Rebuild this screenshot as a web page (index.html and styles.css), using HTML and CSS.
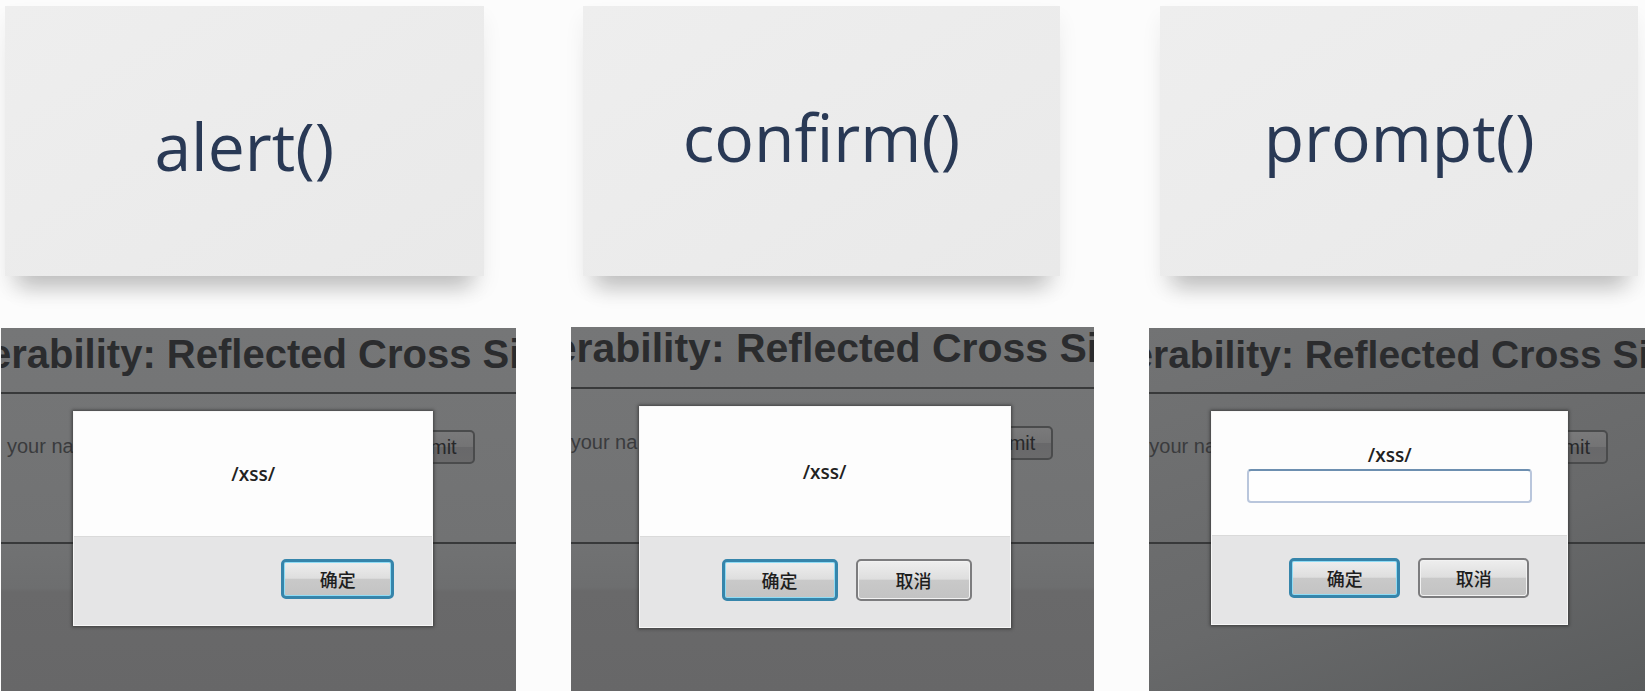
FILE: index.html
```html
<!DOCTYPE html>
<html lang="zh-CN">
<head>
<meta charset="utf-8">
<meta name="viewport" content="width=device-width, initial-scale=1">
<title>alert() confirm() prompt()</title>
<link rel="stylesheet" href="styles.css">
</head>
<body>
<main class="board">
  <article class="column column-alert">
    <h1 class="card">alert()</h1>
    <section class="page">
      <h2 class="page-title">erability: Reflected Cross Si</h2>
      <form class="page-form">
        <span class="page-label">your na</span>
        <button class="submit" type="button">mit</button>
      </form>
      <div class="dialog" role="alertdialog" aria-labelledby="alert-text">
        <div class="dialog-body"><p class="message" id="alert-text">/xss/</p></div>
        <div class="dialog-actions">
          <button class="btn btn-default" type="button">确定</button>
        </div>
      </div>
    </section>
  </article>
  <article class="column column-confirm">
    <h1 class="card">confirm()</h1>
    <section class="page">
      <h2 class="page-title">erability: Reflected Cross Si</h2>
      <form class="page-form">
        <span class="page-label">your na</span>
        <button class="submit" type="button">mit</button>
      </form>
      <div class="dialog" role="alertdialog" aria-labelledby="confirm-text">
        <div class="dialog-body"><p class="message" id="confirm-text">/xss/</p></div>
        <div class="dialog-actions">
          <button class="btn btn-default" type="button">确定</button>
          <button class="btn" type="button">取消</button>
        </div>
      </div>
    </section>
  </article>
  <article class="column column-prompt">
    <h1 class="card">prompt()</h1>
    <section class="page">
      <h2 class="page-title">erability: Reflected Cross Si</h2>
      <form class="page-form">
        <span class="page-label">your na</span>
        <button class="submit" type="button">mit</button>
      </form>
      <div class="dialog" role="dialog" aria-labelledby="prompt-text">
        <div class="dialog-body">
          <label class="message" id="prompt-text" for="prompt-input">/xss/</label>
          <input class="field" id="prompt-input" type="text">
        </div>
        <div class="dialog-actions">
          <button class="btn btn-default" type="button">确定</button>
          <button class="btn" type="button">取消</button>
        </div>
      </div>
    </section>
  </article>
</main>
</body>
</html>
```

FILE: styles.css
```css
* {
  box-sizing: border-box;
}

body {
  margin: 0;
  background: #fcfcfc;
  font-family: "Liberation Sans", "Noto Sans CJK SC", sans-serif;
}

.board {
  display: grid;
  grid-template-columns: 515fr 524fr 496fr;
  column-gap: 55px;
  min-height: 100vh;
  padding-left: 1px;
}

.column {
  display: flex;
  flex-direction: column;
  min-width: 0;
}

/* Raised title cards */
.card {
  display: flex;
  align-items: center;
  justify-content: center;
  height: 270px;
  margin: 6px 32px 52px 4px;
  padding-bottom: 10px;
  background: linear-gradient(150deg, #eeeeee, #e9e9e9);
  box-shadow: 0 26px 20px -14px rgba(0, 0, 0, 0.2), 0 12px 20px rgba(0, 0, 0, 0.06);
  color: #293955;
  font-family: "Open Sans", "Noto Sans", sans-serif;
  font-size: 66px;
  font-weight: 500;
  line-height: 90px;
}

.column-alert .card {
  padding-top: 18px;
}

.column-confirm .card {
  margin: 6px 34px 51px 12px;
}

.column-prompt .card {
  margin: 6px 7px 52px 11px;
}

/* Dimmed page behind each dialog */
.page {
  position: relative;
  flex: 1;
  min-height: 363px;
  overflow: hidden;
  background: linear-gradient(#757677, #717273 215px, #6d6e6f 260px, #69696a 264px, #676768);
}

.column-prompt .page {
  background: linear-gradient(160deg, #727374, #68696a 60%, #5a5c5d);
}

.page-title {
  height: 66px;
  margin: 0;
  border-bottom: 2px solid #38393a;
  color: #2b2c2e;
  font-size: 40px;
  line-height: 52px;
  text-indent: -12px;
  white-space: nowrap;
}

.column-confirm .page-title {
  height: 62px;
  font-size: 41px;
  line-height: 42px;
  text-indent: -17px;
}

.column-prompt .page-title {
  font-size: 39px;
  line-height: 54px;
  text-indent: -18px;
}

.page-form {
  display: flex;
  align-items: flex-start;
  justify-content: space-between;
  height: 150px;
  padding: 36px 41px 0 6px;
  border-bottom: 2px solid #38393a;
}

.column-confirm .page-form {
  height: 155px;
  padding-top: 37px;
  padding-left: 0;
}

.column-prompt .page-form {
  padding-right: 37px;
  padding-left: 0;
}

.page-label {
  color: #3a3b3d;
  font-size: 20px;
  line-height: 32px;
}

.submit {
  width: 96px;
  height: 34px;
  padding: 0 16px;
  border: 2px solid #4a4b4c;
  border-radius: 5px;
  background: linear-gradient(#7a7a7b, #737374 50%, #68686a 50%, #6a6a6b);
  color: #27282a;
  font-family: inherit;
  font-size: 20px;
  text-align: right;
}

/* Dialogs */
.dialog {
  position: absolute;
  top: 83px;
  left: 14%;
  width: 70%;
  border: 1px solid #f7f7f7;
  background: #e5e5e6;
  box-shadow: 0 0 3px 1px rgba(30, 30, 30, 0.6);
}

.column-confirm .dialog {
  top: 79px;
  left: 13%;
  width: 71%;
}

.column-prompt .dialog {
  left: 62px;
  width: 72%;
}

.dialog-body {
  display: flex;
  flex-direction: column;
  align-items: center;
  height: 125px;
  padding: 49px 35px 0;
  border-bottom: 1px solid #dadada;
  background: #fdfdfd;
}

.column-confirm .dialog-body {
  height: 130px;
  padding-top: 52px;
}

.column-prompt .dialog-body {
  height: 124px;
  padding-top: 30px;
}

.message {
  margin: 0;
  color: #222222;
  font-family: "Open Sans", "Noto Sans", sans-serif;
  font-size: 19px;
  font-weight: 600;
  line-height: 27px;
}

.field {
  width: 100%;
  height: 34px;
  padding: 0 8px;
  border: 2px solid #b9c6dc;
  border-top-color: #6d8fb0;
  border-radius: 4px;
  background: #fefefe;
  font-size: 18px;
}

.dialog-actions {
  display: flex;
  justify-content: flex-end;
  gap: 18px;
  padding: 22px 38px 26px;
}

.btn {
  width: 113px;
  height: 40px;
  padding: 0;
  border: 2px solid #7c7c7e;
  border-radius: 5px;
  background: linear-gradient(#eeeeee, #dedede 48%, #c9c9c9 50%, #c3c3c3);
  box-shadow: inset 0 0 0 1px #f2f2f2;
  color: #1e1e1e;
  font-family: "Noto Sans CJK SC", sans-serif;
  font-size: 18px;
  font-weight: 500;
  line-height: 30px;
}

.column-confirm .btn {
  width: 116px;
  height: 42px;
}

.column-prompt .btn {
  width: 111px;
}

.btn-default {
  border: 3px solid #3685ab;
  box-shadow: inset 0 0 0 1px #8fdcf5;
}
```
